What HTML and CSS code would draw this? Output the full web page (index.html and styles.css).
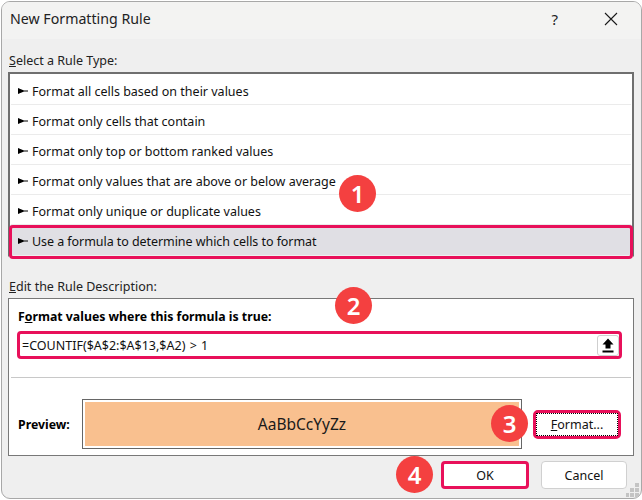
FILE: index.html
```html
<!DOCTYPE html>
<html lang="en">
<head>
<meta charset="utf-8">
<title>New Formatting Rule</title>
<link rel="stylesheet" href="styles.css">
</head>
<body>
<div class="dialog">
  <header class="titlebar">
    <h1 class="title">New Formatting Rule</h1>
    <span class="help">?</span>
    <svg class="close" width="14" height="14" viewBox="0 0 14 14"><path d="M1 1l12 12M13 1L1 13" stroke="#1a1a1a" stroke-width="1.1" fill="none"/></svg>
  </header>
  <main class="content">
    <div class="label label-type"><u>S</u>elect a Rule Type:</div>
    <ul class="rules">
      <li class="rule"><svg class="arrow" width="10" height="6" viewBox="0 0 10 6"><path d="M0 0l6 2.4H10v1.2H6L0 6z"/></svg>Format all cells based on their values</li>
      <li class="rule"><svg class="arrow" width="10" height="6" viewBox="0 0 10 6"><path d="M0 0l6 2.4H10v1.2H6L0 6z"/></svg>Format only cells that contain</li>
      <li class="rule"><svg class="arrow" width="10" height="6" viewBox="0 0 10 6"><path d="M0 0l6 2.4H10v1.2H6L0 6z"/></svg>Format only top or bottom ranked values</li>
      <li class="rule"><svg class="arrow" width="10" height="6" viewBox="0 0 10 6"><path d="M0 0l6 2.4H10v1.2H6L0 6z"/></svg>Format only values that are above or below average</li>
      <li class="rule"><svg class="arrow" width="10" height="6" viewBox="0 0 10 6"><path d="M0 0l6 2.4H10v1.2H6L0 6z"/></svg>Format only unique or duplicate values</li>
      <li class="rule rule-selected"><svg class="arrow" width="10" height="6" viewBox="0 0 10 6"><path d="M0 0l6 2.4H10v1.2H6L0 6z"/></svg>Use a formula to determine which cells to format</li>
    </ul>
    <div class="label label-edit"><u>E</u>dit the Rule Description:</div>
    <section class="description">
      <div class="heading">F<u>o</u>rmat values where this formula is true:</div>
      <div class="formula">
        <span class="formula-text">=COUNTIF($A$2:$A$13,$A2) &gt; 1</span>
        <span class="collapse"><svg width="12" height="15" viewBox="0 0 12 15"><path d="M6 0.5L11.5 6.5H8.5V10.5H3.5V6.5H0.5z" fill="#000"/><rect x="0.5" y="12.5" width="11" height="2" fill="#000"/></svg></span>
      </div>
      <hr class="divider">
      <div class="preview-row">
        <span class="preview-label">Preview:</span>
        <div class="preview"><div class="preview-fill">AaBbCcYyZz</div></div>
        <div class="format-btn"><span class="format-inner"><u>F</u>ormat...</span></div>
      </div>
    </section>
    <footer class="actions">
      <div class="btn btn-ok">OK</div>
      <div class="btn btn-cancel">Cancel</div>
    </footer>
  </main>
  <svg class="grip" width="14" height="14" viewBox="0 0 14 14" fill="#c4c4c4"><rect x="9" y="0" width="4" height="4"/><rect x="4" y="5" width="4" height="4"/><rect x="9" y="5" width="4" height="4"/><rect x="0" y="10" width="3" height="4"/><rect x="4" y="10" width="4" height="4"/><rect x="9" y="10" width="4" height="4"/></svg>
</div>
<span class="badge badge-1">1</span>
<span class="badge badge-2">2</span>
<span class="badge badge-3">3</span>
<span class="badge badge-4">4</span>
</body>
</html>
```
FILE: styles.css
```css
*, *::before, *::after { box-sizing: border-box; }
html, body { margin: 0; padding: 0; }
body {
  position: relative;
  width: 642px;
  height: 500px;
  overflow: hidden;
  background: #fff;
  font-family: "Noto Sans", sans-serif;
  font-size: 12.5px;
  color: #111;
}
.dialog {
  position: relative;
  width: 641px;
  height: 498px;
  margin: 1px 0 0 1px;
  background: #efefef;
  border: 1px solid #a8a8a8;
  border-radius: 9px;
  overflow: hidden;
}
.titlebar {
  display: flex;
  align-items: center;
  height: 37px;
  padding: 0 23px 4px 8px;
  background: #f3f3f2;
}
.title {
  flex: 1;
  margin: 0;
  font-size: 14.2px;
  font-weight: 400;
  color: #222;
}
.help {
  margin-right: 46px;
  font-size: 15px;
  color: #222;
}
.close { display: block; }
.content { padding: 0 7px 0 6px; }
.label { line-height: 16px; color: #222; }
.label-type { margin-left: 1px; padding-top: 14px; }
.rules {
  list-style: none;
  margin: 3px 0 0;
  padding: 1px 0 0;
  background: #fff;
  border: 2px solid #6f6f6f;
  border-bottom: 2px solid #efefef;
}
.rule {
  display: flex;
  align-items: center;
  height: 30px;
  margin: 0 1px;
  padding: 3px 0 0 7px;
  border-bottom: 1px solid #ebebeb;
  color: #111;
}
.arrow { flex: none; margin-right: 4px; fill: #000; }
.rule-selected {
  position: relative;
  margin: 0;
  padding: 2px 0 0 8px;
  background: #e0dfe4;
  border-bottom: 0;
  letter-spacing: -0.06px;
}
.rule-selected::after {
  content: "";
  position: absolute;
  left: -1px;
  right: -1px;
  top: 0;
  height: 34px;
  border: 3px solid #e8105a;
  border-radius: 4px;
}
.label-edit { margin: 22px 0 0 1px; }
.description {
  height: 158px;
  margin-top: 3px;
  padding: 10px 1px 0;
  background: #fff;
  border: 1px solid #787878;
}
.heading { margin-left: 8px; font-size: 12.3px; font-weight: 700; line-height: 16px; color: #000; }
.formula {
  display: flex;
  align-items: center;
  justify-content: space-between;
  height: 28px;
  margin: 6px 10px 0 7px;
  padding: 0 0 0 2px;
  border: 3px solid #e8105a;
  border-radius: 4px;
}
.formula-text { color: #111; word-spacing: 1px; }
.collapse {
  display: flex;
  align-items: center;
  justify-content: center;
  width: 22px;
  height: 21px;
  border: 1px solid #cfcfcf;
  border-radius: 3px;
}
.divider {
  height: 1px;
  margin: 18px 1px 0;
  border: 0;
  background: #c8c8c8;
}
.preview-row {
  display: flex;
  align-items: center;
  margin: 21px 0 0 8px;
}
.preview-label { width: 64px; font-size: 12.3px; font-weight: 700; color: #000; }
.preview {
  width: 440px;
  height: 50px;
  padding: 2px;
  background: #fff;
  border: 1px solid #666;
}
.preview-fill {
  display: flex;
  align-items: center;
  justify-content: center;
  height: 100%;
  background: #f9c08f;
  font-size: 15.5px;
  color: #1a1a1a;
}
.format-btn {
  width: 88px;
  height: 29px;
  margin-left: 11px;
  background: #fff;
  border: 3px solid #e8105a;
  border-radius: 5px;
}
.format-inner {
  display: flex;
  align-items: center;
  justify-content: center;
  height: 100%;
  border: 1px dotted #000;
}
.actions {
  display: flex;
  justify-content: flex-end;
  gap: 12px;
  margin: 5px 7px 0 0;
}
.btn {
  display: flex;
  align-items: center;
  justify-content: center;
  height: 28px;
  background: #fff;
  border-radius: 4px;
}
.btn-ok { width: 88px; border: 3px solid #e8105a; }
.btn-cancel { width: 86px; border: 1px solid #d0d0d0; }
.grip { position: absolute; right: 1px; bottom: 1px; }
.badge {
  position: absolute;
  display: flex;
  align-items: center;
  justify-content: center;
  width: 37px;
  height: 37px;
  border-radius: 50%;
  background: #f44040;
  color: #fff;
  font-size: 24px;
  font-weight: 600;
}
.badge-1 { left: 339px; top: 175px; }
.badge-2 { left: 335px; top: 287px; }
.badge-3 { left: 491px; top: 405px; }
.badge-4 { left: 396px; top: 456px; }
```
